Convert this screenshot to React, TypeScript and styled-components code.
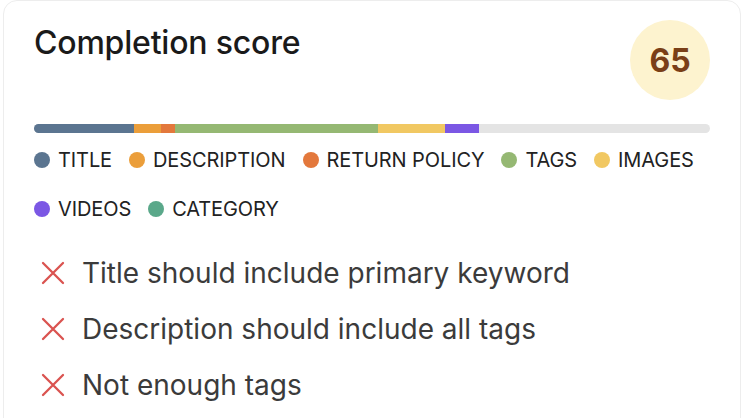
import React from "react"
import styled, { createGlobalStyle } from "styled-components"

const GlobalStyle = createGlobalStyle`
    html, body {
        margin: 0;
        padding: 0;
        background: #ffffff;
        overflow: hidden;
    }
    body {
        font-family: Inter, "Noto Sans", "Liberation Sans", sans-serif;
    }
`;

const Card = styled.div`
    box-sizing: border-box;
    margin-left: 3px;
    width: 738px;
    height: 440px;
    padding: 19px 30px;
    background: #fff;
    border: 1px solid #ededed;
    border-radius: 14px;
`;

const Header = styled.div`
    display: flex;
    justify-content: space-between;
    align-items: flex-start;
`;

const Title = styled.h2`
    margin: 4px 0 0;
    font-size: 32px;
    line-height: 38px;
    font-weight: 500;
    color: #1a1a1a;
    letter-spacing: -0.2px;
`;

const ScoreBadge = styled.div`
    width: 80px;
    height: 80px;
    border-radius: 50%;
    background: #fdf3cf;
    color: #7a3f17;
    font-size: 32px;
    font-weight: 700;
    display: flex;
    align-items: center;
    justify-content: center;
`;

const Bar = styled.div`
    margin-top: 24px;
    height: 9px;
    border-radius: 5px;
    background: #e4e4e4;
    display: flex;
    overflow: hidden;
`;

const Segment = styled.div<{ $color: string; $width: number }>`
    flex: 0 0 ${p => p.$width}px;
    background: ${p => p.$color};
`;

const Legend = styled.div`
    margin-top: 15px;
    display: flex;
    flex-wrap: wrap;
    column-gap: 17px;
    row-gap: 25px;
`;

const LegendItem = styled.div`
    display: flex;
    align-items: center;
    gap: 8px;
    font-size: 20px;
    line-height: 24px;
    color: #222;
    text-transform: uppercase;
    letter-spacing: -0.1px;
`;

const Dot = styled.span<{ $color: string }>`
    width: 16px;
    height: 16px;
    border-radius: 50%;
    background: ${p => p.$color};
`;

const Issues = styled.ul`
    list-style: none;
    margin: 36px 0 0;
    padding: 0;
    display: flex;
    flex-direction: column;
    gap: 24px;
`;

const Issue = styled.li`
    display: flex;
    align-items: center;
    gap: 17px;
    font-size: 28px;
    line-height: 32px;
    color: #3b3b3b;
`;

const CrossIcon = styled.svg`
    margin-left: 7px;
    flex: 0 0 auto;
`;

const categories = [
    { name: "Title", color: "#5b7590", width: 100 },
    { name: "Description", color: "#eb9e3a", width: 27 },
    { name: "Return policy", color: "#e3783c", width: 14 },
    { name: "Tags", color: "#95b873", width: 203 },
    { name: "Images", color: "#f1c862", width: 67 },
    { name: "Videos", color: "#7b57e4", width: 34 },
    { name: "Category", color: "#5aa88a", width: 0 },
];

const issues = [
    "Title should include primary keyword",
    "Description should include all tags",
    "Not enough tags",
];

const Cross = () => (
    <CrossIcon width="24" height="24" viewBox="0 0 24 24" fill="none">
        <path d="M2 2L22 22M22 2L2 22" stroke="#da5350" strokeWidth="2.3" strokeLinecap="round" />
    </CrossIcon>
);

const App = () => {
    return (
        <>
            <GlobalStyle />
            <Card>
                <Header>
                    <Title>Completion score</Title>
                    <ScoreBadge>65</ScoreBadge>
                </Header>
                <Bar>
                    {categories.filter(c => c.width > 0).map(c => (
                        <Segment key={c.name} $color={c.color} $width={c.width} />
                    ))}
                </Bar>
                <Legend>
                    {categories.map(c => (
                        <LegendItem key={c.name}>
                            <Dot $color={c.color} />
                            {c.name}
                        </LegendItem>
                    ))}
                </Legend>
                <Issues>
                    {issues.map(text => (
                        <Issue key={text}>
                            <Cross />
                            {text}
                        </Issue>
                    ))}
                </Issues>
            </Card>
        </>
    )
}

export default App;
